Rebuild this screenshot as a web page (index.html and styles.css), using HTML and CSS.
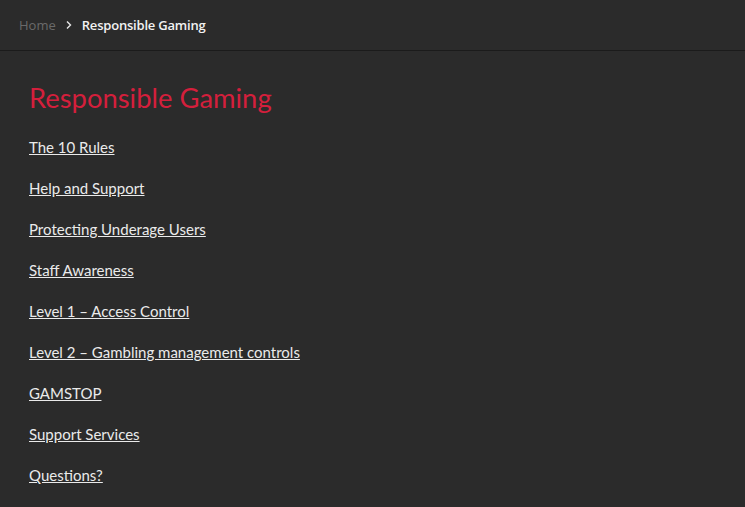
FILE: index.html
```html
<!DOCTYPE html>
<html lang="en">
<head>
    <meta charset="UTF-8">
    <meta name="viewport" content="width=device-width, initial-scale=1.0">
    <title>Responsible Gaming</title>
    <link rel="stylesheet" href="styles.css">
</head>
<body>
    <nav class="breadcrumb">
        <a href="#" class="crumb-home">Home</a>
        <svg class="crumb-sep" width="8" height="10" viewBox="0 0 8 10">
            <path d="M2 1.5 L5.5 5 L2 8.5" fill="none" stroke="#e6e6e6" stroke-width="1.4"/>
        </svg>
        <span class="crumb-current">Responsible Gaming</span>
    </nav>

    <main class="content">
        <h1>Responsible Gaming</h1>
        <ul class="links">
            <li><a href="#">The 10 Rules</a></li>
            <li><a href="#">Help and Support</a></li>
            <li><a href="#">Protecting Underage Users</a></li>
            <li><a href="#">Staff Awareness</a></li>
            <li><a href="#">Level 1 – Access Control</a></li>
            <li><a href="#">Level 2 – Gambling management controls</a></li>
            <li><a href="#">GAMSTOP</a></li>
            <li><a href="#">Support Services</a></li>
            <li><a href="#">Questions?</a></li>
        </ul>
    </main>
</body>
</html>
```

FILE: styles.css
```css
body {
    margin: 0;
    background-color: #2b2b2b;
    font-family: 'Lato', sans-serif;
}

.breadcrumb {
    height: 50px;
    border-bottom: 1px solid #1b1b1b;
    display: flex;
    align-items: center;
    padding: 0 19px;
    font-family: 'Open Sans', sans-serif;
    font-size: 13px;
}

.crumb-home {
    color: #6a6a6a;
    text-decoration: none;
}

.crumb-sep {
    margin: 0 9px;
}

.crumb-current {
    color: #f2f2f2;
    font-weight: 600;
    letter-spacing: -0.2px;
}

.content {
    padding: 0 29px;
}

h1 {
    margin: 31px 0 23px;
    color: #d41f3c;
    font-size: 27.4px;
    font-weight: 400;
    line-height: 32px;
}

.links {
    list-style: none;
    margin: 0;
    padding: 0;
    display: flex;
    flex-direction: column;
    gap: 21px;
}

.links li {
    line-height: 20px;
}

.links a {
    color: #eaeaea;
    font-size: 15px;
    text-decoration: underline;
}
```
